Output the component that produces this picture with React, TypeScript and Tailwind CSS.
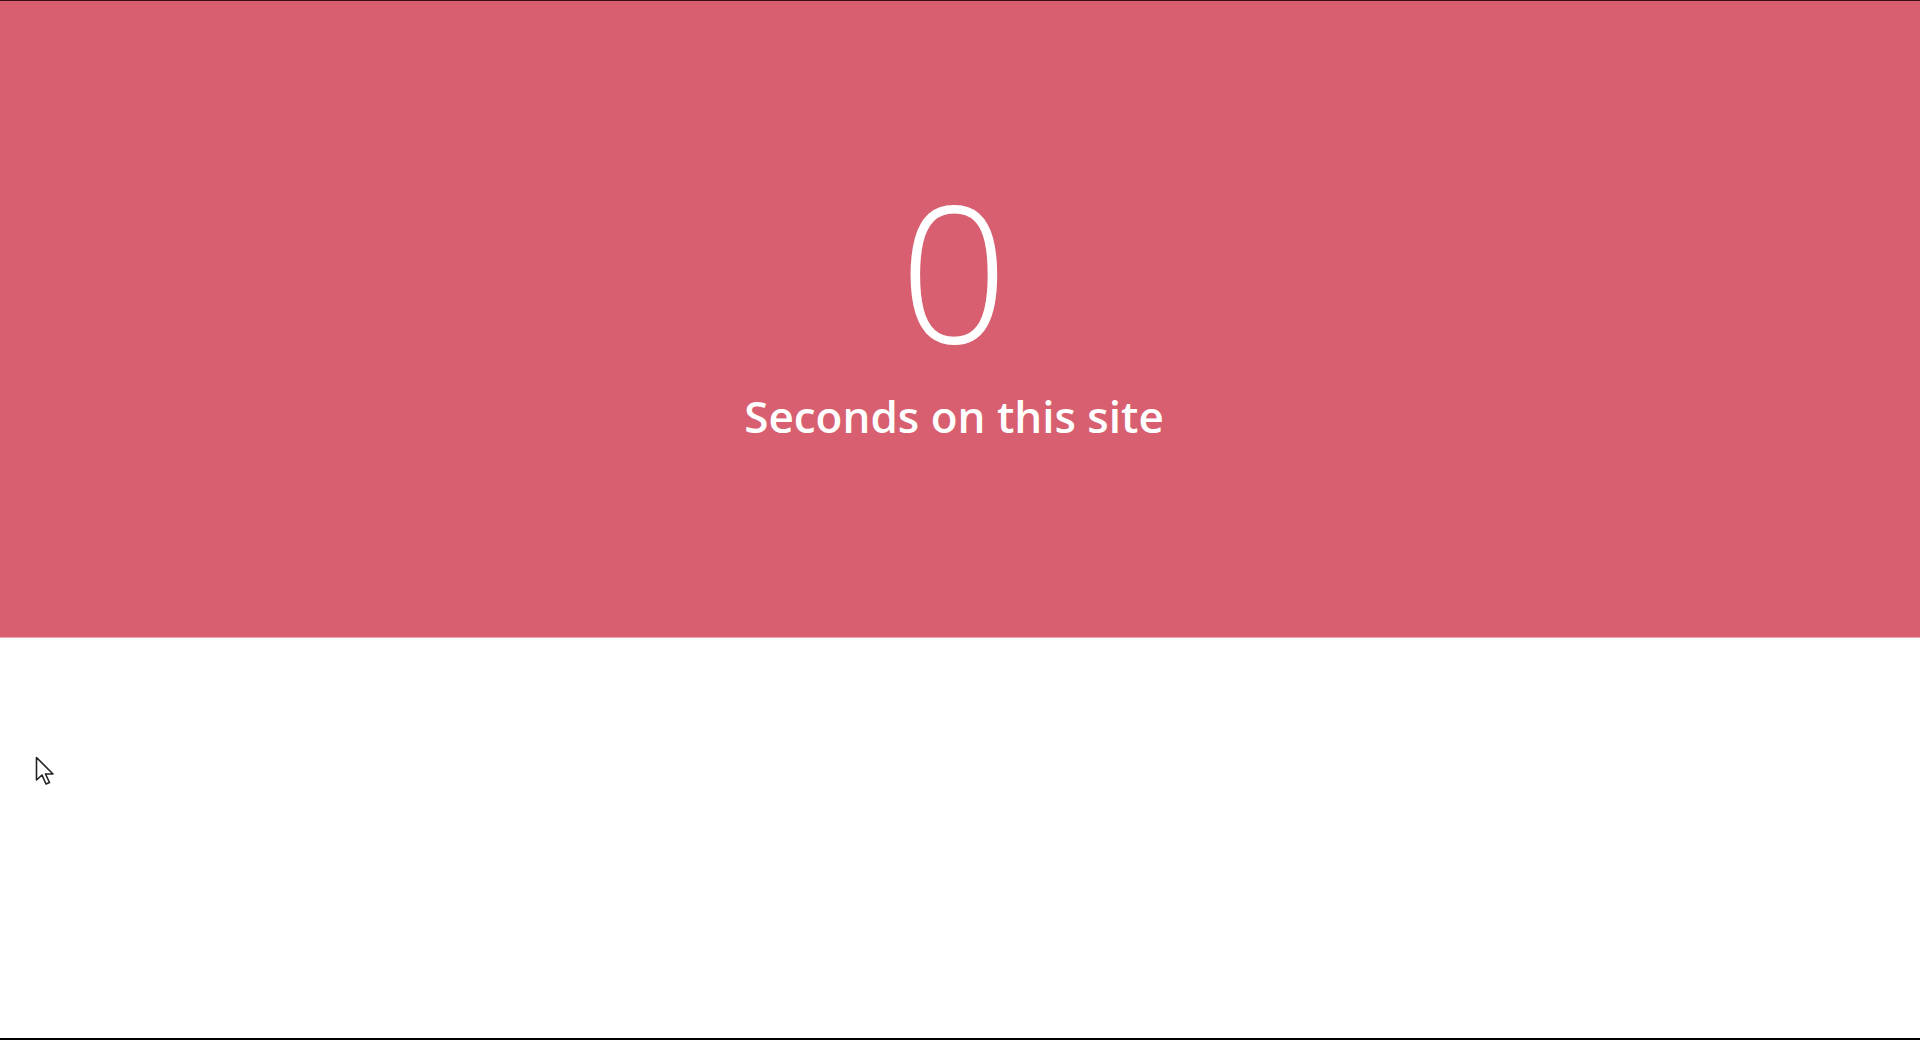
import React from "react";

const Cursor = () => (
  <svg width="22" height="32" viewBox="0 0 22 32" className="absolute left-[35px] top-[756px]">
    <path d="M1.5 1.5 L1.5 24 L7 19 L11 28 L14.5 26.5 L10.5 18 L18 18 Z" fill="#fff" stroke="#222" strokeWidth="1.6" strokeLinejoin="round" />
  </svg>
);

const App = () => {
  return (
    <div className="relative flex h-[1040px] w-full flex-col overflow-hidden bg-white font-['Open_Sans',sans-serif]">
      <div className="h-px w-full bg-[#3b0d14]" />
      <section className="flex h-[636px] w-full flex-col items-center bg-[#d75f6f] pr-3 text-white">
        <h1 className="mt-[174px] text-[190px] font-light leading-none">0</h1>
        <p className="mt-[29px] text-[44px] font-semibold leading-none">Seconds on this site</p>
      </section>
      <div className="h-px w-full bg-[#e9aab3]" />
      <div className="flex-1" />
      <div className="h-[2px] w-full bg-black" />
      <Cursor />
    </div>
  );
};

export default App;
